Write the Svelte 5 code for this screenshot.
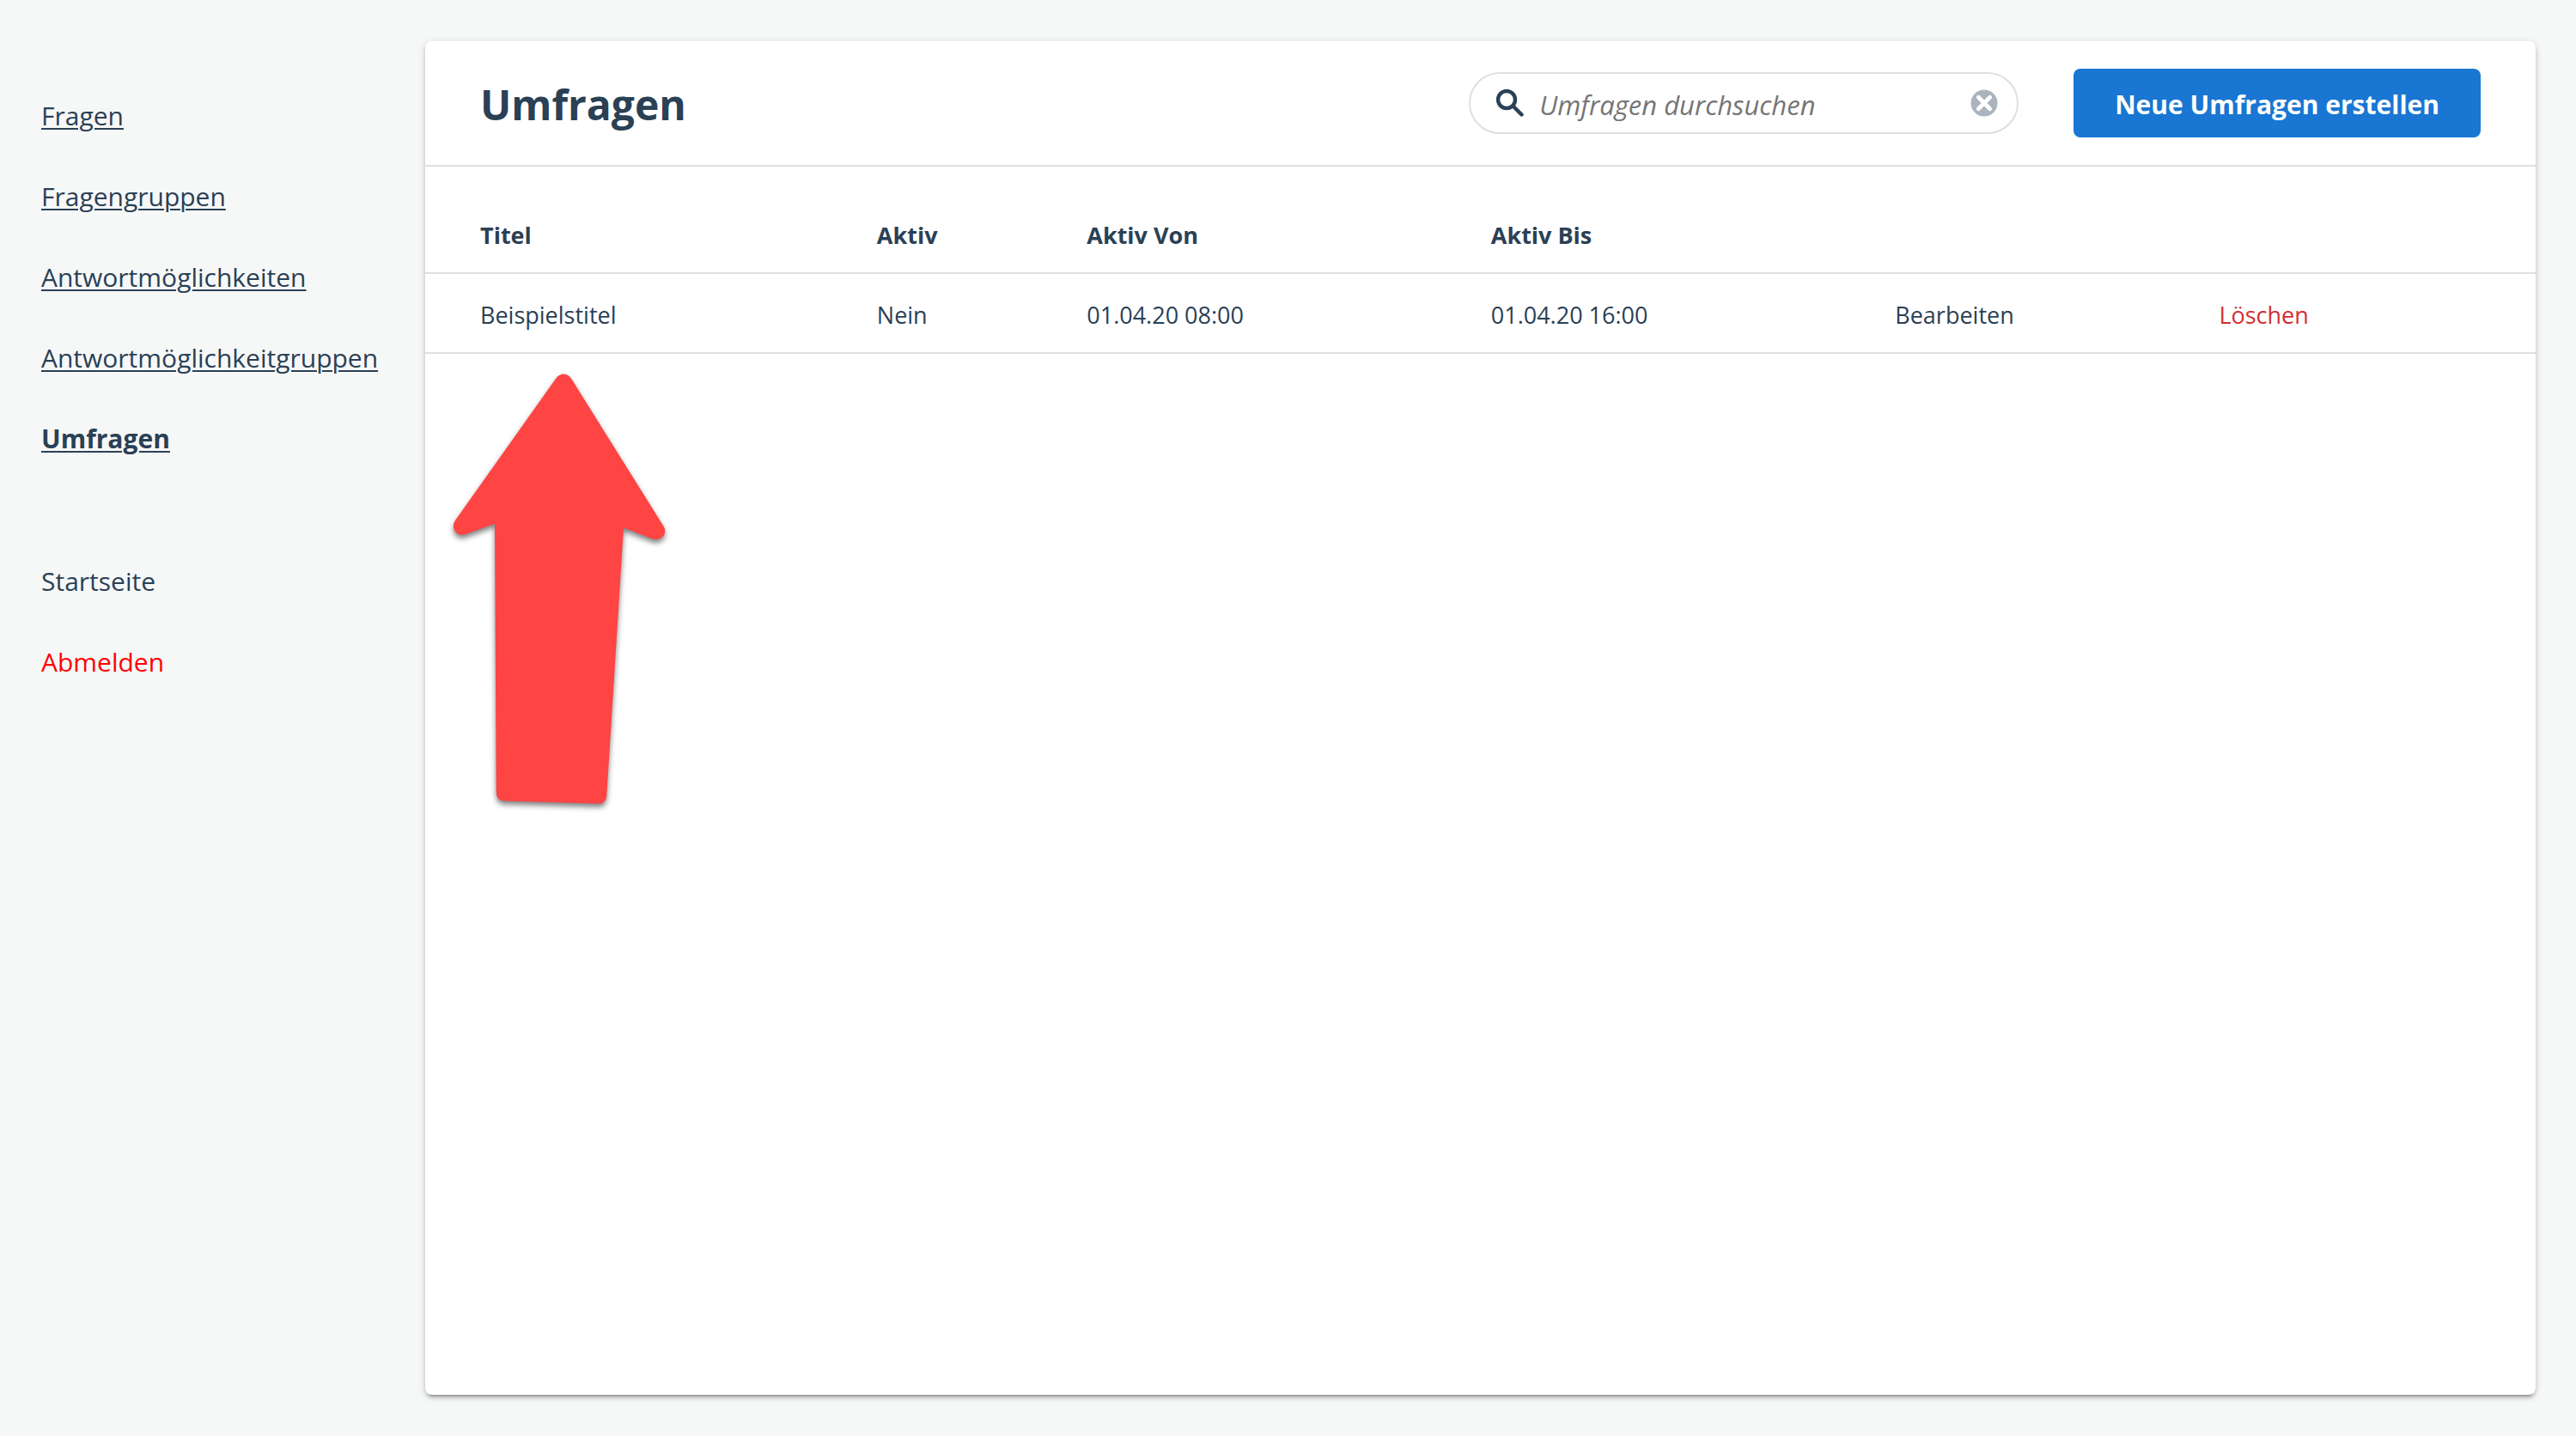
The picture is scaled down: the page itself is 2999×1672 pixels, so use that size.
<script>
  const navigation = ['Fragen', 'Fragengruppen', 'Antwortmöglichkeiten', 'Antwortmöglichkeitgruppen', 'Umfragen'];
  const current = 'Umfragen';

  const surveys = [
    { title: 'Beispielstitel', active: false, from: '01.04.20 08:00', until: '01.04.20 16:00' }
  ];

  let query = $state('');
  const visible = $derived(
    surveys.filter((survey) => survey.title.toLowerCase().includes(query.toLowerCase()))
  );
</script>

<div class="layout">
  <nav class="sidebar" aria-label="Hauptnavigation">
    <ul>
      {#each navigation as item}
        <li>
          <a href="#{item}" class:current={item === current} aria-current={item === current ? 'page' : undefined}>{item}</a>
        </li>
      {/each}
    </ul>
    <ul>
      <li><a class="plain" href="#Startseite">Startseite</a></li>
      <li><button class="logout" type="button">Abmelden</button></li>
    </ul>
  </nav>

  <main class="card">
    <header>
      <h1>Umfragen</h1>
      <div class="search">
        <svg class="magnifier" viewBox="0 0 32 32" aria-hidden="true">
          <circle cx="12" cy="12" r="10" />
          <path d="M19.5 19.5 29.5 29.5" />
        </svg>
        <input type="text" aria-label="Umfragen durchsuchen" placeholder="Umfragen durchsuchen" bind:value={query} />
        <button class="clear" type="button" aria-label="Suche leeren" onclick={() => (query = '')}>
          <svg viewBox="0 0 32 32" aria-hidden="true">
            <circle cx="16" cy="16" r="15.5" />
            <path d="M9.3 9.3 22.7 22.7M22.7 9.3 9.3 22.7" />
          </svg>
        </button>
      </div>
      <button class="create" type="button">Neue Umfragen erstellen</button>
    </header>

    <table>
      <colgroup>
        <col class="col-title" />
        <col class="col-active" />
        <col class="col-date" />
        <col class="col-date" />
        <col class="col-edit" />
        <col />
      </colgroup>
      <thead>
        <tr>
          <th scope="col">Titel</th>
          <th scope="col">Aktiv</th>
          <th scope="col">Aktiv Von</th>
          <th scope="col">Aktiv Bis</th>
          <td></td>
          <td></td>
        </tr>
      </thead>
      <tbody>
        {#each visible as survey}
          <tr>
            <td>{survey.title}</td>
            <td>{survey.active ? 'Ja' : 'Nein'}</td>
            <td>{survey.from}</td>
            <td>{survey.until}</td>
            <td><button class="action" type="button">Bearbeiten</button></td>
            <td><button class="action danger" type="button">Löschen</button></td>
          </tr>
        {/each}
      </tbody>
    </table>

    <svg class="pointer" viewBox="0 0 320 570" aria-hidden="true">
      <path
        d="M147 41 30.3 205.4C24 214 31 225.5 42 222L76 209.7 77.7 522Q77.7 532.2 87 532.5L197 535.8Q206 535.8 206.3 526L226 214.5 259 227.3C270 231 278 221 272.4 212.6L165.7 41.8C161 33.6 152 33.6 147 41Z"
      />
    </svg>
  </main>
</div>

<style>
  :global(body) {
    margin: 0;
    background: #f6f8f7;
  }

  .layout {
    display: flex;
    box-sizing: border-box;
    min-height: 100vh;
    padding: 48px 47px 48px 0;
    color: #2a4055;
    font-family: 'Segoe UI', 'Open Sans', 'Noto Sans', sans-serif;
    font-size: 30px;
    line-height: 46px;
  }

  button,
  input {
    padding: 0;
    border: 0;
    background: none;
    color: inherit;
    font: inherit;
  }

  button {
    cursor: pointer;
  }

  .sidebar {
    flex: none;
    box-sizing: border-box;
    width: 495px;
    padding: 64px 0 0 48px;
  }

  .sidebar ul {
    display: flex;
    flex-direction: column;
    align-items: flex-start;
    gap: 48px;
    margin: 0 0 120px;
    padding: 0;
    list-style: none;
  }

  .sidebar li {
    display: flex;
  }

  .sidebar a {
    color: inherit;
    text-decoration-thickness: 2px;
    text-underline-offset: 3px;
  }

  .sidebar a.current {
    font-weight: 700;
  }

  .sidebar a.plain {
    text-decoration: none;
  }

  .logout {
    color: #ff0000;
  }

  .card {
    position: relative;
    flex: 1;
    min-width: 0;
    border-radius: 8px;
    background: #ffffff;
    box-shadow:
      0 6px 2px -4px rgba(0, 0, 0, 0.2),
      0 4px 4px 0 rgba(0, 0, 0, 0.14),
      0 2px 10px 0 rgba(0, 0, 0, 0.14);
  }

  header {
    display: flex;
    align-items: center;
    gap: 64px;
    padding: 32px 64px;
    border-bottom: 2px solid #dfdfdf;
  }

  h1 {
    flex: 1;
    margin: 0;
    padding-top: 4px;
    font-size: 48px;
    line-height: 76px;
  }

  .search {
    display: flex;
    align-items: center;
    box-sizing: border-box;
    width: 640px;
    height: 72px;
    padding: 0 22px 0 30px;
    border: 2px solid #dfdfdf;
    border-radius: 36px;
  }

  .magnifier {
    flex: none;
    width: 32px;
    height: 32px;
    fill: none;
    stroke: #2a4055;
    stroke-width: 4.4;
    stroke-linecap: round;
  }

  .search input {
    flex: 1;
    min-width: 0;
    padding: 4px 18px 0;
    font-size: 31px;
    font-style: italic;
    outline: 0;
  }

  .search input::placeholder {
    color: #757575;
    opacity: 1;
  }

  .clear {
    display: flex;
    flex: none;
  }

  .clear svg {
    width: 32px;
    height: 32px;
    fill: #abb4bc;
  }

  .clear path {
    stroke: #ffffff;
    stroke-width: 4.8;
    stroke-linecap: round;
  }

  .create {
    height: 80px;
    padding: 4px 48px 0;
    border-radius: 8px;
    background: #1976d2;
    color: #ffffff;
    font-weight: 700;
  }

  table {
    width: 100%;
    table-layout: fixed;
    border-collapse: separate;
    border-spacing: 0;
    font-size: 27px;
  }

  .col-title {
    width: 21.4%;
  }

  .col-active {
    width: 9.95%;
  }

  .col-date {
    width: 19.15%;
  }

  .col-edit {
    width: 15.35%;
  }

  th,
  td {
    height: 87px;
    padding: 4px 0 0;
    border-bottom: 2px solid #dfdfdf;
    text-align: left;
  }

  thead th,
  thead td {
    padding-top: 36px;
  }

  th:first-child,
  td:first-child {
    padding-left: 64px;
  }

  .danger {
    color: #d32f2f;
  }

  .pointer {
    position: absolute;
    top: 352px;
    left: 5px;
    width: 320px;
    height: 570px;
    fill: #ff4444;
    filter: drop-shadow(0 4px 3px rgba(0, 0, 0, 0.5));
    pointer-events: none;
  }
</style>
